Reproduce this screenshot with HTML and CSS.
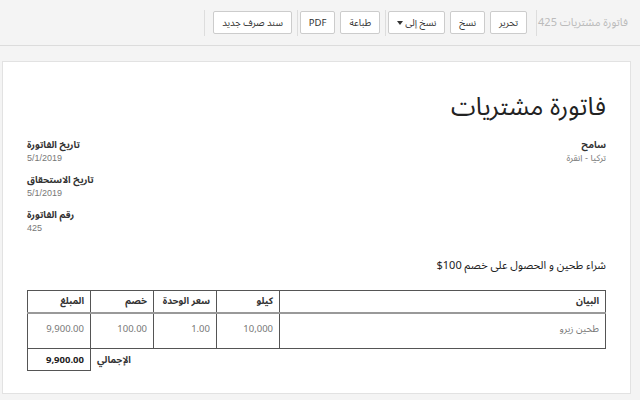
FILE: index.html
```html
<!DOCTYPE html>
<html lang="ar" dir="rtl">
<head>
<meta charset="utf-8">
<link rel="stylesheet" href="styles.css">
</head>
<body>
<header class="toolbar">
  <div class="doc-title">فاتورة مشتريات 425</div>
  <span class="sep sep-first"></span>
  <div class="group">
    <button class="btn">تحرير</button>
    <button class="btn">نسخ</button>
    <button class="btn">نسخ إلى<span class="caret"></span></button>
  </div>
  <span class="sep"></span>
  <div class="group">
    <button class="btn">طباعة</button>
    <button class="btn">PDF</button>
  </div>
  <span class="sep"></span>
  <div class="group">
    <button class="btn">سند صرف جديد</button>
  </div>
  <span class="sep sep-last"></span>
</header>

<main class="sheet">
  <h1 class="inv-title">فاتورة مشتريات</h1>

  <div class="info">
    <div class="party">
      <div class="label">سامح</div>
      <div class="value">تركيا - انقرة</div>
    </div>
    <div class="meta">
      <div class="meta-item">
        <div class="label">تاريخ الفاتورة</div>
        <div class="value">5/1/2019</div>
      </div>
      <div class="meta-item">
        <div class="label">تاريخ الاستحقاق</div>
        <div class="value">5/1/2019</div>
      </div>
      <div class="meta-item">
        <div class="label">رقم الفاتورة</div>
        <div class="value">425</div>
      </div>
    </div>
  </div>

  <p class="desc">شراء طحين و الحصول على خصم 100$</p>

  <table class="items">
    <colgroup>
      <col>
      <col class="c-num">
      <col class="c-num">
      <col class="c-num">
      <col class="c-num">
    </colgroup>
    <thead>
      <tr>
        <th>البيان</th>
        <th>كيلو</th>
        <th>سعر الوحدة</th>
        <th>خصم</th>
        <th>المبلغ</th>
      </tr>
    </thead>
    <tbody>
      <tr class="row">
        <td>طحين زيرو</td>
        <td class="num">10,000</td>
        <td class="num">1.00</td>
        <td class="num">100.00</td>
        <td class="num">9,900.00</td>
      </tr>
      <tr class="total">
        <td class="blank"></td>
        <td class="blank"></td>
        <td class="blank"></td>
        <td class="total-label">الإجمالي</td>
        <td class="num total-value">9,900.00</td>
      </tr>
    </tbody>
  </table>
</main>
</body>
</html>
```

FILE: styles.css
```css
* { box-sizing: border-box; }

html, body {
  margin: 0;
  padding: 0;
  background: #f4f4f4;
  font-family: "Noto Sans Arabic", "Noto Naskh Arabic", "Noto Sans", "DejaVu Sans", sans-serif;
  color: #333;
}

.toolbar {
  height: 46px;
  border-bottom: 1px solid #dcdcdc;
  display: flex;
  align-items: center;
  padding-right: 12px;
}

.doc-title {
  font-size: 11px;
  color: #bbb;
  white-space: nowrap;
}

.sep {
  width: 1px;
  height: 26px;
  background: #ddd;
  margin: 0 2px 0 5px;
}

.sep-first { margin: 0 1px 0 9px; }
.sep-last { margin: 0 8px 0 0; }

.group {
  display: flex;
  gap: 5px;
}

.btn {
  height: 23px;
  padding: 0 8px;
  background: #fff;
  border: 1px solid #ccc;
  border-radius: 2px;
  font-family: inherit;
  font-size: 9.5px;
  color: #333;
  display: flex;
  align-items: center;
  white-space: nowrap;
}

.caret {
  display: inline-block;
  width: 0;
  height: 0;
  border-left: 3px solid transparent;
  border-right: 3px solid transparent;
  border-top: 4px solid #333;
  margin-right: 2px;
}

.sheet {
  margin: 15px 9px 0 2px;
  height: 333px;
  background: #fff;
  border: 1px solid #e2e2e2;
  padding: 20px 24px 0 24px;
}

.inv-title {
  margin: 0;
  font-size: 25px;
  font-weight: normal;
  color: #222;
  line-height: 50px;
}

.info {
  display: flex;
  justify-content: space-between;
  margin-top: 6px;
}

.label,
.value {
  font-family: "Liberation Sans", "Noto Sans Arabic", sans-serif;
}

.label {
  font-size: 9.5px;
  font-weight: bold;
  color: #333;
  line-height: 13px;
}

.value {
  font-size: 9px;
  color: #777;
  line-height: 13px;
  margin-top: 1px;
}

.meta {
  display: flex;
  flex-direction: column;
  gap: 8px;
}

.meta-item {
  text-align: left;
}

.desc {
  margin: 23px 0 16px;
  font-size: 11px;
  color: #222;
  line-height: 16px;
}

.items {
  width: 100%;
  border-collapse: collapse;
  font-size: 9.5px;
  table-layout: fixed;
}

.c-num { width: 63px; }

.items th {
  border: 1px solid #555;
  border-bottom: 2px solid #999;
  height: 22px;
  padding: 0 6px;
  text-align: right;
  font-weight: bold;
  color: #333;
  white-space: nowrap;
}

.items .row td {
  border: 1px solid #555;
  border-top: none;
  height: 36px;
  padding: 5px 6px 0;
  vertical-align: top;
  color: #777;
}

.items .row .num { text-align: right; }

.items .total td {
  height: 22px;
  padding: 0 6px;
}

.items .total .blank { border: none; }

.total-label {
  font-weight: bold;
  color: #333;
  border: none;
  white-space: nowrap;
  text-align: left;
}

.total-value {
  border: 1px solid #555;
  border-top: none;
  font-weight: bold;
  color: #222;
}
```
